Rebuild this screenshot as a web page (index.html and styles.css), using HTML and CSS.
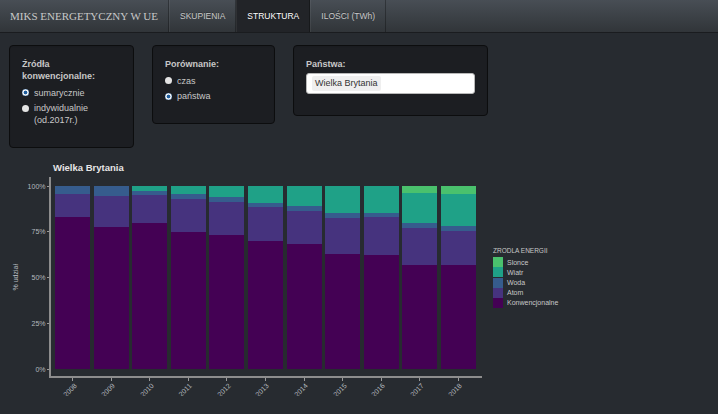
FILE: index.html
```html
<!DOCTYPE html>
<html lang="pl">
<head>
<meta charset="utf-8">
<title>Miks energetyczny w UE</title>
<link rel="stylesheet" href="styles.css">
</head>
<body>
<nav class="navbar">
  <span class="brand">MIKS ENERGETYCZNY W UE</span>
  <ul class="tabs">
    <li class="tab">SKUPIENIA</li>
    <li class="tab active">STRUKTURA</li>
    <li class="tab">ILOŚCI (TWh)</li>
  </ul>
</nav>
<main class="content">
  <section class="controls">
    <div class="well w1">
      <div class="label">Źródła<br>konwencjonalne:</div>
      <div class="radio checked"><span class="dot"></span><span>sumarycznie</span></div>
      <div class="radio"><span class="dot"></span><span>indywidualnie<br>(od.2017r.)</span></div>
    </div>
    <div class="well w2">
      <div class="label">Porównanie:</div>
      <div class="radio"><span class="dot"></span><span>czas</span></div>
      <div class="radio checked"><span class="dot"></span><span>państwa</span></div>
    </div>
    <div class="well w3">
      <div class="label">Państwa:</div>
      <div class="select"><span class="chip">Wielka Brytania</span></div>
    </div>
  </section>

  <section class="chart">
    <h2 class="chart-title">Wielka Brytania</h2>
    <div class="chart-row">
      <div class="ytitle">% udział</div>
      <div class="yticks">
        <div class="ytick">100%</div>
        <div class="ytick">75%</div>
        <div class="ytick">50%</div>
        <div class="ytick">25%</div>
        <div class="ytick">0%</div>
      </div>
      <div class="plot">
        <div class="bars">
          <div class="bar"><div class="seg woda" style="height:4.5%"></div><div class="seg atom" style="height:12.4%"></div><div class="seg konw" style="height:83.1%"></div></div>
          <div class="bar"><div class="seg woda" style="height:5.5%"></div><div class="seg atom" style="height:17.1%"></div><div class="seg konw" style="height:77.4%"></div></div>
          <div class="bar"><div class="seg wiatr" style="height:2.7%"></div><div class="seg woda" style="height:2.2%"></div><div class="seg atom" style="height:15.3%"></div><div class="seg konw" style="height:79.8%"></div></div>
          <div class="bar"><div class="seg wiatr" style="height:4.5%"></div><div class="seg woda" style="height:2.4%"></div><div class="seg atom" style="height:18%"></div><div class="seg konw" style="height:75.1%"></div></div>
          <div class="bar"><div class="seg wiatr" style="height:6.2%"></div><div class="seg woda" style="height:2.6%"></div><div class="seg atom" style="height:18.2%"></div><div class="seg konw" style="height:73%"></div></div>
          <div class="bar"><div class="seg wiatr" style="height:9.1%"></div><div class="seg woda" style="height:2.4%"></div><div class="seg atom" style="height:18.5%"></div><div class="seg konw" style="height:70%"></div></div>
          <div class="bar"><div class="seg wiatr" style="height:11.2%"></div><div class="seg woda" style="height:2.7%"></div><div class="seg atom" style="height:17.6%"></div><div class="seg konw" style="height:68.5%"></div></div>
          <div class="bar"><div class="seg wiatr" style="height:14.7%"></div><div class="seg woda" style="height:2.9%"></div><div class="seg atom" style="height:19.6%"></div><div class="seg konw" style="height:62.8%"></div></div>
          <div class="bar"><div class="seg wiatr" style="height:14.7%"></div><div class="seg woda" style="height:2.3%"></div><div class="seg atom" style="height:20.6%"></div><div class="seg konw" style="height:62.4%"></div></div>
          <div class="bar"><div class="seg slonce" style="height:4%"></div><div class="seg wiatr" style="height:16.2%"></div><div class="seg woda" style="height:2.9%"></div><div class="seg atom" style="height:20%"></div><div class="seg konw" style="height:56.9%"></div></div>
          <div class="bar"><div class="seg slonce" style="height:4.4%"></div><div class="seg wiatr" style="height:17.5%"></div><div class="seg woda" style="height:2.9%"></div><div class="seg atom" style="height:18.4%"></div><div class="seg konw" style="height:56.8%"></div></div>
        </div>
      </div>
      <div class="legend">
        <div class="legend-title">ZRODLA ENERGII</div>
        <div class="key"><span class="sw slonce"></span>Slonce</div>
        <div class="key"><span class="sw wiatr"></span>Wiatr</div>
        <div class="key"><span class="sw woda"></span>Woda</div>
        <div class="key"><span class="sw atom"></span>Atom</div>
        <div class="key"><span class="sw konw"></span>Konwencjonalne</div>
      </div>
    </div>
    <div class="xaxis">
      <div class="xcell"><div class="xanchor"><span class="xlbl">2008</span></div></div>
      <div class="xcell"><div class="xanchor"><span class="xlbl">2009</span></div></div>
      <div class="xcell"><div class="xanchor"><span class="xlbl">2010</span></div></div>
      <div class="xcell"><div class="xanchor"><span class="xlbl">2011</span></div></div>
      <div class="xcell"><div class="xanchor"><span class="xlbl">2012</span></div></div>
      <div class="xcell"><div class="xanchor"><span class="xlbl">2013</span></div></div>
      <div class="xcell"><div class="xanchor"><span class="xlbl">2014</span></div></div>
      <div class="xcell"><div class="xanchor"><span class="xlbl">2015</span></div></div>
      <div class="xcell"><div class="xanchor"><span class="xlbl">2016</span></div></div>
      <div class="xcell"><div class="xanchor"><span class="xlbl">2017</span></div></div>
      <div class="xcell"><div class="xanchor"><span class="xlbl">2018</span></div></div>
    </div>
  </section>
</main>
</body>
</html>
```
FILE: styles.css
```css
* { box-sizing: border-box; }

body {
  margin: 0;
  background: #272b30;
  font-family: "Liberation Sans", Arial, sans-serif;
  color: #c8c8c8;
}

/* navbar */
.navbar {
  display: flex;
  height: 33px;
  background-image: linear-gradient(#484e55, #3a3f44 60%, #313539);
  border-bottom: 1px solid #1a1c1f;
}
.brand {
  font-family: "Liberation Serif", "Times New Roman", serif;
  font-size: 11px;
  line-height: 32px;
  color: #c8c8c8;
  padding: 0 10px 0 10px;
  border-right: 1px solid rgba(0, 0, 0, 0.3);
}
.tabs {
  display: flex;
  list-style: none;
  margin: 0;
  padding: 0;
}
.tab {
  font-size: 8.5px;
  line-height: 32px;
  padding: 0 10px;
  color: #c8c8c8;
  border-left: 1px solid rgba(255, 255, 255, 0.06);
  border-right: 1px solid rgba(0, 0, 0, 0.3);
  text-shadow: 0 -1px 0 rgba(0, 0, 0, 0.3);
}
.tab.active {
  background: #222428;
  color: #ffffff;
}

/* controls */
.content {
  padding: 12px 9px 0;
}
.controls {
  display: flex;
  align-items: flex-start;
  gap: 18px;
}
.well {
  background: #1c1e22;
  border: 1px solid #0c0d0e;
  border-radius: 4px;
  padding: 12px 12px 21px;
  box-shadow: inset 0 1px 1px rgba(0, 0, 0, 0.05);
}
.w1 { width: 125px; }
.w2 { width: 123px; }
.w3 { width: 195px; }

.label {
  font-size: 9px;
  font-weight: bold;
  line-height: 12px;
  color: #c8c8c8;
}
.radio {
  display: flex;
  gap: 5px;
  margin-top: 3.5px;
  font-size: 9px;
  line-height: 12px;
  color: #c8c8c8;
}
.label + .radio { margin-top: 4.5px; }
.dot {
  flex: none;
  width: 7px;
  height: 7px;
  margin-top: 2.5px;
  border-radius: 50%;
  background: #e4e4e4;
}
.radio.checked .dot {
  background: radial-gradient(circle, #1d5c9c 0 1.6px, #f4f4f4 2.2px 2.8px, #8fb4da 3.2px);
}

.select {
  margin-top: 3px;
  height: 21px;
  background: #ffffff;
  border: 1px solid #b8b8b8;
  border-radius: 3px;
  padding: 2px 5px;
  display: flex;
  align-items: center;
}
.chip {
  background: #efefef;
  color: #333333;
  font-size: 9px;
  line-height: 15px;
  padding: 0 3px;
  border-radius: 2px;
}

/* chart */
.chart {
  margin-top: 14px;
}
.chart-title {
  margin: 0 0 3px 44px;
  font-size: 9.5px;
  line-height: 12px;
  font-weight: bold;
  color: #e6e6e6;
}
.chart-row {
  display: flex;
  align-items: center;
}
.ytitle {
  width: 13px;
  writing-mode: vertical-rl;
  transform: rotate(180deg);
  font-size: 7px;
  line-height: 13px;
  text-align: center;
  color: #b4b9bf;
}
.yticks {
  width: 27px;
  height: 201px;
  padding: 9px 0;
  display: flex;
  flex-direction: column;
  justify-content: space-between;
}
.ytick {
  height: 0;
  display: flex;
  align-items: center;
  justify-content: flex-end;
  font-size: 7px;
  color: #b4b9bf;
}
.ytick::after {
  content: "";
  width: 2.5px;
  height: 1px;
  margin-left: 1px;
  background: #9a9a9a;
}
.plot {
  width: 433px;
  height: 201px;
  border-left: 2px solid #8d8d8d;
  border-bottom: 2px solid #8d8d8d;
  padding: 9px 6px 7px 4px;
}
.bars {
  height: 100%;
  display: flex;
  gap: 3.6px;
}
.bar {
  width: 35px;
  height: 100%;
  display: flex;
  flex-direction: column;
}
.seg { flex: none; }

.slonce { background: #4ac16d; }
.wiatr { background: #1fa187; }
.woda { background: #365c8d; }
.atom { background: #46337e; }
.konw { background: #440154; }

.legend {
  margin-left: 11px;
  font-size: 7px;
  color: #c8c8c8;
}
.legend-title {
  font-size: 6.5px;
  line-height: 8px;
  margin-bottom: 2px;
}
.key {
  display: flex;
  align-items: center;
  gap: 4px;
  height: 10.2px;
}
.sw {
  width: 10px;
  height: 10px;
}

.xaxis {
  display: flex;
  gap: 3.6px;
  margin-left: 40px;
  padding-left: 6px;
}
.xcell {
  width: 35px;
  display: flex;
  flex-direction: column;
  align-items: center;
}
.xcell::before {
  content: "";
  width: 1px;
  height: 2.5px;
  background: #9a9a9a;
}
.xanchor {
  width: 0;
  height: 14px;
  margin-top: 1.5px;
}
.xlbl {
  display: block;
  width: 30px;
  margin-left: -30px;
  text-align: right;
  transform: rotate(-45deg);
  transform-origin: 100% 0;
  font-size: 7px;
  line-height: 8px;
  white-space: nowrap;
  color: #b4b9bf;
}
```
